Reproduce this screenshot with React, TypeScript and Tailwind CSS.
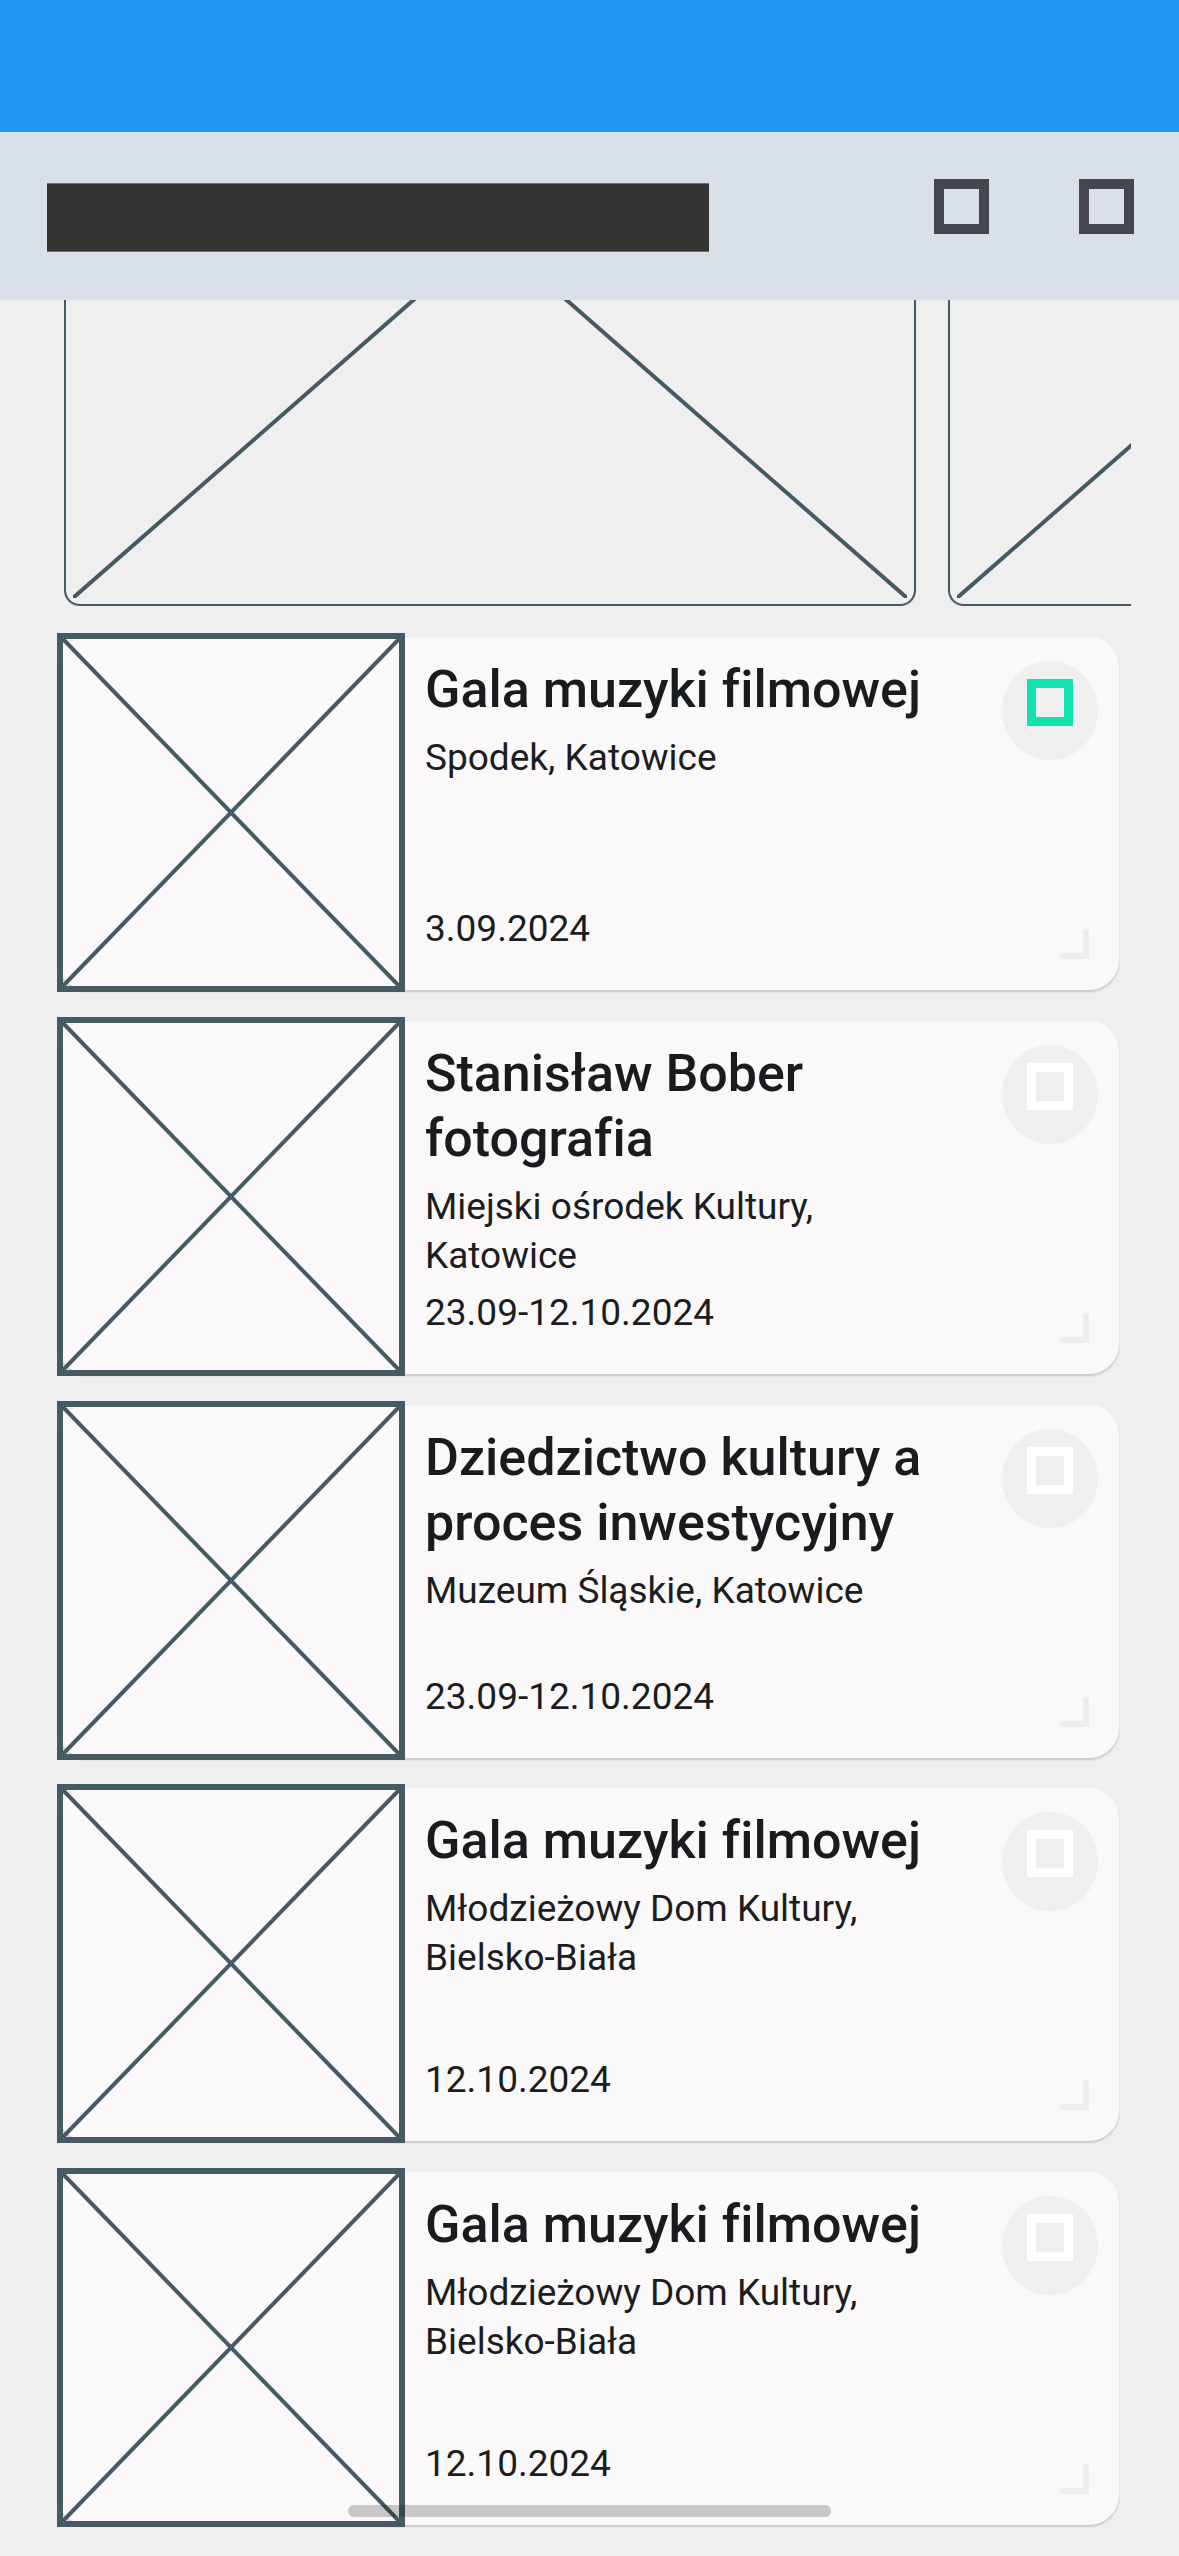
import React from "react";

type Item = { title: string; place: string; date: string; active?: boolean };

const items: Item[] = [
  { title: "Gala muzyki filmowej", place: "Spodek, Katowice", date: "3.09.2024", active: true },
  { title: "Stanisław Bober fotografia", place: "Miejski ośrodek Kultury, Katowice", date: "23.09-12.10.2024" },
  { title: "Dziedzictwo kultury a proces inwestycyjny", place: "Muzeum Śląskie, Katowice", date: "23.09-12.10.2024" },
  { title: "Gala muzyki filmowej", place: "Młodzieżowy Dom Kultury, Bielsko-Biała", date: "12.10.2024" },
  { title: "Gala muzyki filmowej", place: "Młodzieżowy Dom Kultury, Bielsko-Biała", date: "12.10.2024" },
];

function CrossLines({ inset = 0, stroke = 4 }: { inset?: number; stroke?: number }) {
  return (
    <svg className="w-full h-full block" viewBox="0 0 100 100" preserveAspectRatio="none">
      <line x1={inset} y1={inset} x2={100 - inset} y2={100 - inset} stroke="#455A64" strokeWidth={stroke} vectorEffect="non-scaling-stroke" />
      <line x1={inset} y1={100 - inset} x2={100 - inset} y2={inset} stroke="#455A64" strokeWidth={stroke} vectorEffect="non-scaling-stroke" />
    </svg>
  );
}

function CarouselCard() {
  return (
    <div className="w-[852px] h-[744px] shrink-0 border-x-2 border-b-2 border-[#455A64] rounded-b-[16px] shadow-[0_1px_1px_rgba(0,0,0,0.18)] px-[7px] pb-[6px] pt-[6px]">
      <CrossLines stroke={4} />
    </div>
  );
}

function CornerMark() {
  return (
    <svg width="30" height="30" viewBox="0 0 30 30" className="block">
      <path d="M27 3 V27 H3" fill="none" stroke="#EDEDED" strokeWidth="6" strokeLinecap="round" strokeLinejoin="miter" />
    </svg>
  );
}

function EventCard({ item }: { item: Item }) {
  return (
    <div className="ml-[57px] w-[1062px] h-[353px] flex bg-[#FAF8F9] rounded-[30px] shadow-[0_2px_2px_rgba(0,0,0,0.16)]">
      <div className="w-[348px] h-[359px] -mt-[4px] -mb-[2px] shrink-0 border-[6px] border-[#455A64]">
        <CrossLines stroke={4} />
      </div>
      <div className="ml-[20px] w-[520px] flex flex-col pt-[20px] pb-[37px] [font-variant-ligatures:none]">
        <div className="text-[52px] leading-[65px] font-medium text-[#181C1F]">{item.title}</div>
        <div className="mt-[11px] text-[37px] leading-[49px] text-[#1B1D1F]">{item.place}</div>
        <div className="mt-auto text-[37px] leading-[49px] text-[#1B1D1F]">{item.date}</div>
      </div>
      <div className="ml-auto flex flex-col items-end justify-between pt-[24px] pb-[31px] pr-[21px]">
        <div className="w-[96px] h-[99px] rounded-[50%] bg-[#EFEFEF] flex justify-center pt-[18px]">
          <div className={`w-[46px] h-[47px] border-[9px] ${item.active ? "border-[#12E2AE]" : "border-white"}`} />
        </div>
        <div className="mr-[9px]">
          <CornerMark />
        </div>
      </div>
    </div>
  );
}

export default function App() {
  return (
    <div className="relative w-[1179px] h-[2556px] overflow-hidden bg-[#EFEFEF]" style={{ fontFamily: "Roboto, 'Noto Sans', sans-serif" }}>
      <div className="h-[132px] bg-[#2196F3]" />
      <div className="h-[168px] bg-[#D9E0E7] flex items-start">
        <div className="ml-[47px] mt-[51px] w-[662px] h-[69px] bg-[#333331] border-y border-[#6f6f6f]" />
        <div className="ml-auto mt-[47px] w-[55px] h-[55px] border-[10px] border-[#45454F]" />
        <div className="ml-[90px] mr-[45px] mt-[47px] w-[55px] h-[55px] border-[10px] border-[#45454F]" />
      </div>
      <div className="w-[1131px] h-[306px] overflow-hidden flex items-end gap-[32px] pl-[64px]">
        <CarouselCard />
        <CarouselCard />
      </div>
      <div className="pt-[31px] flex flex-col gap-[30.75px]">
        {items.map((it, i) => (
          <EventCard key={i} item={it} />
        ))}
      </div>
      <div className="absolute left-[348px] top-[2505px] w-[483px] h-[12px] rounded-full bg-black/20" />
    </div>
  );
}
